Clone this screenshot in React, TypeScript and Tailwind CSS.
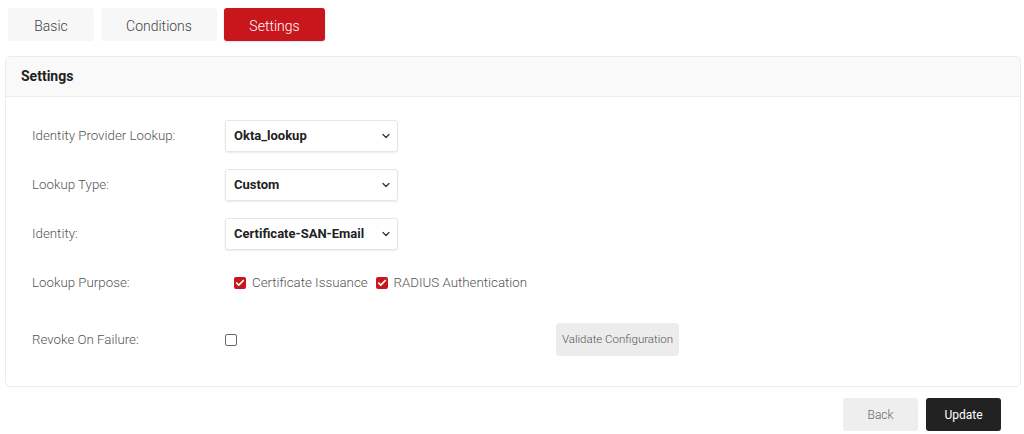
import React from 'react'
import { ChevronDown, Check } from 'lucide-react'

const font = { fontFamily: 'Roboto, "Liberation Sans", sans-serif' }

const Tab = ({ label, active, w }: { label: string; active?: boolean; w: string }) => (
    <div
        className={`${w} h-[33px] flex items-center justify-center pt-[3px] rounded-[3px] text-[14px] font-light ${
            active ? 'bg-[#c8161d] text-white shadow-sm' : 'bg-[#f7f7f7] text-[#444]'
        }`}
    >
        {label}
    </div>
)

const FakeSelect = ({ value }: { value: string }) => (
    <div className="w-[173px] h-[32px] flex items-center justify-between pl-[8px] pr-[5px] bg-white border border-[#e6e6e6] rounded-[3px] shadow-[0_1px_2px_rgba(0,0,0,0.08)]">
        <span className="text-[13px] font-bold text-[#222]">{value}</span>
        <ChevronDown size={12} strokeWidth={2.5} className="text-[#333]" />
    </div>
)

const RedCheck = () => (
    <span className="w-[12px] h-[12px] rounded-[2px] bg-[#c8161d] flex items-center justify-center">
        <Check size={10} strokeWidth={4} className="text-white" />
    </span>
)

const Row = ({ label, children, h = 'h-[32px]' }: { label: string; children: React.ReactNode; h?: string }) => (
    <div className={`flex items-center ${h}`}>
        <div className="w-[193px] text-[13.3px] font-light text-[#555]">{label}</div>
        <div className="flex items-center flex-1">{children}</div>
    </div>
)

export default function App() {
    return (
        <div className="w-[1024px] h-[434px] bg-white overflow-hidden" style={font}>
            {/* tabs */}
            <div className="flex gap-[7px] pt-[8px] pl-[8px]">
                <Tab label="Basic" w="w-[86px]" />
                <Tab label="Conditions" w="w-[116px]" />
                <Tab label="Settings" w="w-[101px]" active />
            </div>

            {/* settings card */}
            <div className="mx-[5px] mt-[15px] w-[1016px] h-[331px] border border-[#ececec] rounded-[5px] overflow-hidden">
                <div className="h-[40px] bg-[#f9f9f9] border-b border-[#ececec] flex items-center pl-[15px]">
                    <span className="text-[14px] font-bold text-[#222]">Settings</span>
                </div>

                <div className="pl-[26px] pt-[23px] flex flex-col">
                    <Row label="Identity Provider Lookup:">
                        <FakeSelect value="Okta_lookup" />
                    </Row>
                    <div className="mt-[17px]">
                        <Row label="Lookup Type:">
                            <FakeSelect value="Custom" />
                        </Row>
                    </div>
                    <div className="mt-[17px]">
                        <Row label="Identity:">
                            <FakeSelect value="Certificate-SAN-Email" />
                        </Row>
                    </div>
                    <div className="mt-[17px]">
                        <Row label="Lookup Purpose:">
                            <div className="flex items-center pl-[9px] text-[13.3px] font-light text-[#555]">
                                <RedCheck />
                                <span className="ml-[6px]">Certificate Issuance</span>
                                <span className="ml-[8px]"><RedCheck /></span>
                                <span className="ml-[6px]">RADIUS Authentication</span>
                            </div>
                        </Row>
                    </div>
                    <div className="mt-[24px]">
                        <Row label="Revoke On Failure:" h="h-[33px]">
                            <div className="w-[331px] flex items-center">
                                <span className="w-[12px] h-[12px] border border-[#666] rounded-[2px] bg-white" />
                            </div>
                            <button className="w-[123px] h-[33px] rounded-[4px] bg-[#ececec] text-[11.5px] font-light text-[#555]">
                                Validate Configuration
                            </button>
                        </Row>
                    </div>
                </div>
            </div>

            {/* footer buttons */}
            <div className="flex justify-end gap-[8px] pr-[23px] mt-[11px]">
                <button className="w-[75px] h-[33px] rounded-[3px] bg-[#eeeeee] text-[12px] font-light text-[#666]">Back</button>
                <button className="w-[75px] h-[33px] rounded-[3px] bg-[#222222] text-[12px] text-white">Update</button>
            </div>
        </div>
    )
}
